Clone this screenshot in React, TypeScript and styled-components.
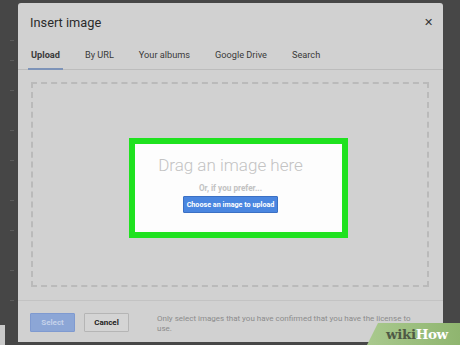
import styled, { createGlobalStyle } from "styled-components";

const GlobalStyle = createGlobalStyle`
  html, body {
    margin: 0;
    padding: 0;
    background: #474747;
  }
  body {
    font-family: Roboto, "Liberation Sans", Arial, sans-serif;
  }
`;

const Screen = styled.div`
  position: relative;
  width: 460px;
  height: 345px;
  overflow: hidden;
  display: flex;
  background: #474747;
`;

const Ruler = styled.div`
  width: 18px;
  flex-shrink: 0;
  position: relative;
  background: #464646;
`;

const Tick = styled.div`
  position: absolute;
  left: 10px;
  width: 4px;
  height: 1px;
  background: #5c5c5c;
`;

const LightPatch = styled.div`
  position: absolute;
  left: 0;
  bottom: 0;
  width: 5px;
  height: 20px;
  background: #c9c9c9;
`;

const Dialog = styled.div`
  margin-top: 3px;
  width: 425px;
  height: 339px;
  background: #d1d1d1;
  border-radius: 3px 3px 0 0;
  display: flex;
  flex-direction: column;
`;

const Header = styled.div`
  height: 36px;
  display: flex;
  align-items: center;
  justify-content: space-between;
  padding: 2px 10px 0 12px;
  box-sizing: border-box;
`;

const Title = styled.div`
  font-size: 12.8px;
  color: #2b2b2b;
`;

const Close = styled.div`
  font-size: 11px;
  color: #333;
  font-weight: 500;
`;

const Tabs = styled.div`
  height: 30px;
  display: flex;
  align-items: stretch;
  gap: 19px;
  padding-left: 10px;
  border-bottom: 1px solid #bcbcbc;
`;

const Tab = styled.div<{ $active?: boolean }>`
  padding: 1px 3px 0;
  display: flex;
  align-items: center;
  font-size: 9.2px;
  color: #3a3a3a;
  font-weight: ${(p) => (p.$active ? 700 : 400)};
  border-bottom: 2px solid ${(p) => (p.$active ? "#7d93b8" : "transparent")};
  margin-bottom: -1px;
`;

const Body = styled.div`
  padding: 12px 14px 13px 13px;
  border-bottom: 1px solid #c3c3c3;
`;

const DropZone = styled.div`
  height: 205px;
  box-sizing: border-box;
  border: 2px dashed #bababa;
  display: flex;
  align-items: center;
  justify-content: center;
  padding: 6px 0 0 16px;
`;

const Highlight = styled.div`
  width: 219px;
  height: 100px;
  box-sizing: border-box;
  border: 6px solid #1fe21f;
  background: #fdfdfd;
  display: flex;
  flex-direction: column;
  align-items: center;
  padding: 11px 15px 0 0;
`;

const DragText = styled.div`
  font-size: 17px;
  font-weight: 300;
  color: #c3c3c3;
`;

const Prefer = styled.div`
  margin-top: 8px;
  font-size: 8.2px;
  font-weight: 700;
  color: #c2c2c2;
`;

const ChooseButton = styled.div`
  margin-top: 3px;
  width: 95px;
  height: 17px;
  display: flex;
  align-items: center;
  justify-content: center;
  background: #4a86e0;
  border: 1px solid #3b70c4;
  box-sizing: border-box;
  border-radius: 1px;
  font-size: 7.2px;
  font-weight: 700;
  color: #fff;
  white-space: nowrap;
`;

const Footer = styled.div`
  display: flex;
  align-items: flex-start;
  padding: 12px 0 0 12px;
`;

const Button = styled.div<{ $primary?: boolean }>`
  width: 45px;
  height: 19px;
  box-sizing: border-box;
  display: flex;
  align-items: center;
  justify-content: center;
  font-size: 8px;
  font-weight: 700;
  border-radius: 1px;
  margin-right: 9px;
  background: ${(p) => (p.$primary ? "#8ca6d6" : "#d4d4d4")};
  color: ${(p) => (p.$primary ? "#c5d2ea" : "#222")};
  border: 1px solid ${(p) => (p.$primary ? "#7f9ad0" : "#b5b5b5")};
`;

const Note = styled.div`
  margin-left: 19px;
  margin-top: 1px;
  width: 264px;
  font-size: 8px;
  line-height: 10px;
  color: #8c8c8c;
`;

const Watermark = styled.div`
  position: absolute;
  right: 0;
  bottom: 0;
  width: 93px;
  height: 22px;
  background: linear-gradient(90deg, #a9c98e, #8fb56f);
  clip-path: polygon(11px 0, 100% 0, 100% 100%, 0 100%);
  display: flex;
  align-items: center;
  padding-left: 19px;
  box-sizing: border-box;
  font-family: "DejaVu Serif", "Liberation Serif", serif;
  font-weight: 700;
  font-size: 13.5px;
  letter-spacing: -0.4px;
`;

const Wiki = styled.span`
  color: #4f5a45;
`;

const How = styled.span`
  color: #ffffff;
`;

const tabs = ["Upload", "By URL", "Your albums", "Google Drive", "Search"];
const ticks = [40, 60, 90, 130, 160, 200, 230, 270, 300];

export default function App() {
  return (
    <>
      <GlobalStyle />
      <Screen>
        <Ruler>
          {ticks.map((t) => (
            <Tick key={t} style={{ top: t }} />
          ))}
          <LightPatch />
        </Ruler>
        <Dialog>
          <Header>
            <Title>Insert image</Title>
            <Close>✕</Close>
          </Header>
          <Tabs>
            {tabs.map((t, i) => (
              <Tab key={t} $active={i === 0}>
                {t}
              </Tab>
            ))}
          </Tabs>
          <Body>
            <DropZone>
              <Highlight>
                <DragText>Drag an image here</DragText>
                <Prefer>Or, if you prefer...</Prefer>
                <ChooseButton>Choose an image to upload</ChooseButton>
              </Highlight>
            </DropZone>
          </Body>
          <Footer>
            <Button $primary>Select</Button>
            <Button>Cancel</Button>
            <Note>
              Only select images that you have confirmed that you have the
              license to use.
            </Note>
          </Footer>
        </Dialog>
        <Watermark>
          <Wiki>wiki</Wiki>
          <How>How</How>
        </Watermark>
      </Screen>
    </>
  );
}
